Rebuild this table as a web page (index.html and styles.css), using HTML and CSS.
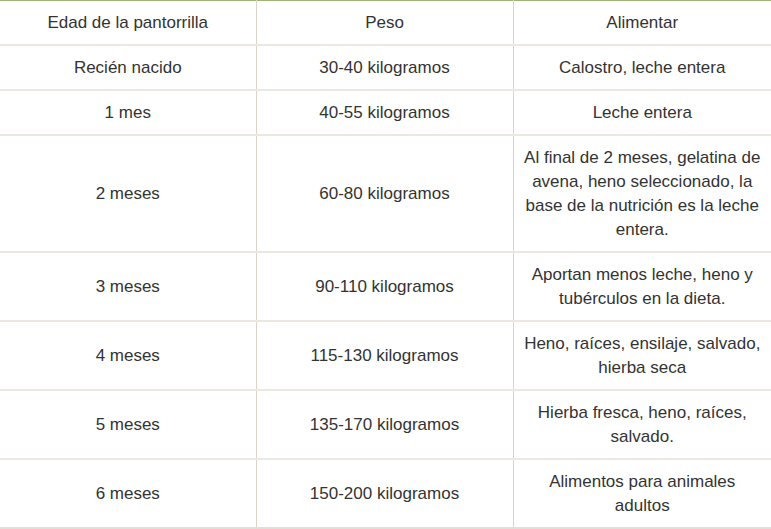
FILE: index.html
```html
<!DOCTYPE html>
<html lang="es">
<head>
<meta charset="utf-8">
<link rel="stylesheet" href="styles.css">
</head>
<body>
<table class="tbl">
  <colgroup>
    <col class="c1"><col class="c2"><col class="c3">
  </colgroup>
  <thead>
    <tr><th>Edad de la pantorrilla</th><th>Peso</th><th>Alimentar</th></tr>
  </thead>
  <tbody>
    <tr><td>Recién nacido</td><td>30-40 kilogramos</td><td>Calostro, leche entera</td></tr>
    <tr><td>1 mes</td><td>40-55 kilogramos</td><td>Leche entera</td></tr>
    <tr><td>2 meses</td><td>60-80 kilogramos</td><td>Al final de 2 meses, gelatina de avena, heno seleccionado, la base de la nutrición es la leche entera.</td></tr>
    <tr><td>3 meses</td><td>90-110 kilogramos</td><td>Aportan menos leche, heno y tubérculos en la dieta.</td></tr>
    <tr><td>4 meses</td><td>115-130 kilogramos</td><td>Heno, raíces, ensilaje, salvado, hierba seca</td></tr>
    <tr><td>5 meses</td><td>135-170 kilogramos</td><td>Hierba fresca, heno, raíces, salvado.</td></tr>
    <tr><td>6 meses</td><td>150-200 kilogramos</td><td>Alimentos para animales adultos</td></tr>
  </tbody>
</table>
</body>
</html>
```
FILE: styles.css
```css
html, body {
  margin: 0;
  padding: 0;
  background: #ffffff;
}
.tbl {
  width: 771px;
  border-collapse: collapse;
  table-layout: fixed;
  font-family: "Liberation Sans", Arial, sans-serif;
  font-size: 17px;
  line-height: 24px;
  color: #333333;
  border-top: 1px solid #9cb574;
}
.c1 { width: 256px; }
.c2 { width: 257px; }
.c3 { width: 258px; }
.tbl th,
.tbl td {
  font-weight: normal;
  text-align: center;
  vertical-align: middle;
  padding: 10px 9px 9px;
  border-bottom: 2px solid #ece8e1;
  border-left: 1px solid #d9d3c8;
}
.tbl th:first-child,
.tbl td:first-child {
  border-left: none;
}
.tbl thead th {
  padding: 10px 9px 9px;
}
.tbl tbody tr:last-child td {
  border-bottom: 2px solid #e3ded5;
}
```
